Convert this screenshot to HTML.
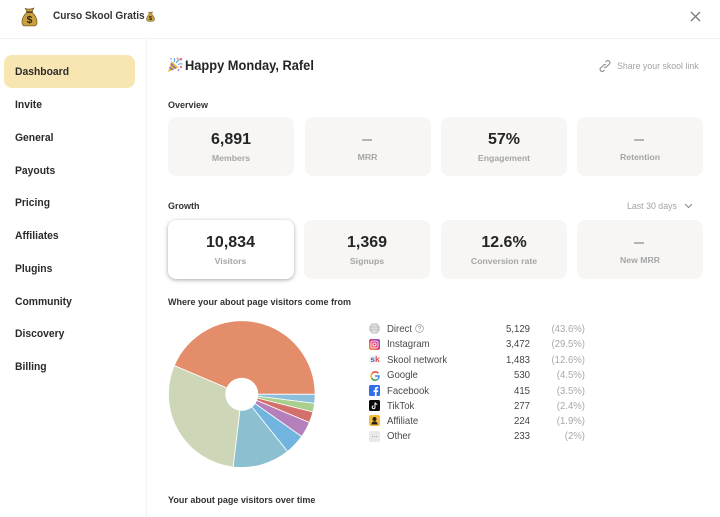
<!DOCTYPE html>
<html><head><meta charset="utf-8"><style>
html,body{margin:0;padding:0;background:#fff}
#p{position:relative;width:720px;height:517px;overflow:hidden;background:#fff;font-family:"Liberation Sans",Arial,sans-serif;color:#202124}
.t{position:absolute;white-space:nowrap;line-height:14px}
.n{position:absolute;left:15px;font-size:11px;font-weight:bold;line-height:14px;color:#2b2b2b;white-space:nowrap;transform:scaleX(.94);transform-origin:left center}
.h{font-size:9px;font-weight:bold;color:#333}
.c{position:absolute;width:126px;height:59px;background:#f7f6f4;border-radius:8px;text-align:center}
.v{position:absolute;left:0;right:0;top:14px;font-size:16px;font-weight:bold;line-height:18px;color:#252525}
.l{position:absolute;left:0;right:0;top:35px;font-size:8.7px;font-weight:bold;line-height:12px;color:#a5a5a5}
.d{position:absolute;left:57px;top:22px;width:10px;height:2px;background:#b4b4b4}
.l2{top:34px}
.lb{position:absolute;left:387px;font-size:10.2px;line-height:13px;color:#4a4a4a;white-space:nowrap;transform:scaleX(.94);transform-origin:left center}
.nm{position:absolute;left:470px;width:60px;text-align:right;font-size:10.2px;line-height:13px;color:#444;transform:scaleX(.94);transform-origin:right center}
.pc{position:absolute;left:530px;width:55px;text-align:right;font-size:10.2px;line-height:13px;color:#a8a8a8;transform:scaleX(.94);transform-origin:right center}
.i{position:absolute;left:369px}
</style></head><body><div id="p">
<div style="position:absolute;left:0;top:38px;width:720px;height:1px;background:#f3f3f3"></div>
<div style="position:absolute;left:146px;top:39px;width:1px;height:478px;background:#f3f3f3"></div>

<svg style="position:absolute;left:20.5px;top:6.5px" width="17" height="20" viewBox="0 0 18 21"><path d="M4.5 1.5 Q9 3 13.5 1 L11.5 5.5 Q17 10 17 16 Q17 20 13 20 L5 20 Q1 20 1 16 Q1 10 6.5 5.5Z" fill="#c9a040" stroke="#6b4d1c" stroke-width=".7"/><rect x="5.6" y="4.6" width="6.8" height="1.6" fill="#4a3413"/><text x="9" y="17" font-family="Liberation Sans" font-size="11" font-weight="bold" text-anchor="middle" fill="#2e2411">$</text></svg>
<div class="t" style="left:53px;top:9px;font-size:11px;font-weight:bold;color:#333;transform:scaleX(.92);transform-origin:left center">Curso Skool Gratis</div>
<svg style="position:absolute;left:146px;top:10.5px" width="9" height="11" viewBox="0 0 18 21"><path d="M5 1.5 Q9 3 13 1 L11.5 5.5 Q17 10 17 16 Q17 20 13 20 L5 20 Q1 20 1 16 Q1 10 6.5 5.5Z" fill="#c9a040" stroke="#6b4d1c"/><text x="9" y="17" font-family="Liberation Sans" font-size="11" font-weight="bold" text-anchor="middle" fill="#2e2411">$</text></svg>
<svg style="position:absolute;left:689px;top:10px" width="13" height="13" viewBox="0 0 13 13"><path d="M2 2 L11 11 M11 2 L2 11" stroke="#7b7b7b" stroke-width="1.3" fill="none"/></svg>

<div style="position:absolute;left:4px;top:55px;width:131px;height:33px;background:#f8e6b2;border-radius:8px"></div>
<div class="n" style="top:65px">Dashboard</div>
<div class="n" style="top:98px">Invite</div>
<div class="n" style="top:131px">General</div>
<div class="n" style="top:164px">Payouts</div>
<div class="n" style="top:196px">Pricing</div>
<div class="n" style="top:229px">Affiliates</div>
<div class="n" style="top:262px">Plugins</div>
<div class="n" style="top:295px">Community</div>
<div class="n" style="top:327px">Discovery</div>
<div class="n" style="top:360px">Billing</div>

<svg style="position:absolute;left:167px;top:57px" width="16" height="16" viewBox="0 0 16 16"><path d="M1 15 L4.5 4 L11.5 10.5Z" fill="#e8b93c"/><path d="M2.6 10.2 L6 13 M3.7 6.5 L8.8 11.6" stroke="#7a6bc4" stroke-width="1.3"/><path d="M7 5 Q8.4 3 7 1.2 M11 7.5 Q13 6.3 15.5 7 M9 6 L12.5 2" stroke="#5a9fe0" stroke-width="1.1" fill="none"/><circle cx="14" cy="2.2" r="1.2" fill="#e0608a"/><circle cx="10.5" cy="1.5" r="1" fill="#e8a03c"/><circle cx="14" cy="10" r="1.1" fill="#e0608a"/><circle cx="11.5" cy="13" r=".9" fill="#7a6bc4"/><circle cx="4" cy="1.8" r=".8" fill="#5a9fe0"/></svg>
<div class="t" style="left:185px;top:59px;font-size:14.2px;font-weight:bold;color:#252525;transform:scaleX(.905);transform-origin:left center">Happy Monday, Rafel</div>
<svg style="position:absolute;left:598px;top:59px" width="14" height="14" viewBox="0 0 14 14" fill="none" stroke="#909090" stroke-width="1.1"><path d="M6 8 Q7.2 9 8.5 7.8 L11.6 4.8 A2.1 2.1 0 0 0 8.7 1.9 L7.4 3.1"/><path d="M8 6 Q6.8 5 5.5 6.2 L2.4 9.2 A2.1 2.1 0 0 0 5.3 12.1 L6.6 10.9"/></svg>
<div class="t" style="left:617px;top:59px;font-size:8.8px;color:#a3a3a3">Share your skool link</div>

<div class="t h" style="left:168px;top:98px">Overview</div>
<div class="c" style="left:168px;top:117px"><div class="v">6,891</div><div class="l">Members</div></div>
<div class="c" style="left:304.5px;top:117px"><div class="d"></div><div class="l l2">MRR</div></div>
<div class="c" style="left:441px;top:117px"><div class="v">57%</div><div class="l">Engagement</div></div>
<div class="c" style="left:577px;top:117px"><div class="d"></div><div class="l l2">Retention</div></div>

<div class="t h" style="left:168px;top:199px">Growth</div>
<div class="t" style="left:627px;top:199px;font-size:8.8px;color:#a3a3a3">Last 30 days</div>
<svg style="position:absolute;left:684px;top:202px" width="9" height="8" viewBox="0 0 9 8"><path d="M1 2 L4.5 5.5 L8 2" fill="none" stroke="#8a8a8a" stroke-width="1.1"/></svg>
<div class="c" style="left:167.5px;top:219.5px;background:#fff;box-shadow:0 1px 4px rgba(0,0,0,.35)"><div class="v">10,834</div><div class="l">Visitors</div></div>
<div class="c" style="left:304px;top:220px"><div class="v">1,369</div><div class="l">Signups</div></div>
<div class="c" style="left:441px;top:220px"><div class="v">12.6%</div><div class="l">Conversion rate</div></div>
<div class="c" style="left:577px;top:220px"><div class="d"></div><div class="l l2">New MRR</div></div>

<div class="t h" style="left:168px;top:295px">Where your about page visitors come from</div>

<svg style="position:absolute;left:160px;top:310px" width="170" height="170" viewBox="160 310 170 170">
<g stroke="#fff" stroke-width=".8" stroke-linejoin="round">
<path d="M241.8 394.2 L315.1 394.2 A73.3 73.3 0 0 1 314.5 403.4Z" fill="#8bbfdb"/>
<path d="M241.8 394.2 L314.5 403.4 A73.3 73.3 0 0 1 312.9 412Z" fill="#a9cf8f"/>
<path d="M241.8 394.2 L312.9 412 A73.3 73.3 0 0 1 309.4 422.5Z" fill="#d4706b"/>
<path d="M241.8 394.2 L309.4 422.5 A73.3 73.3 0 0 1 301.6 436.5Z" fill="#b57fbb"/>
<path d="M241.8 394.2 L301.6 436.5 A73.3 73.3 0 0 1 287.5 451.5Z" fill="#72b4e0"/>
<path d="M241.8 394.2 L287.5 451.5 A73.3 73.3 0 0 1 233.1 467Z" fill="#8cc0d0"/>
<path d="M241.8 394.2 L233.1 467 A73.3 73.3 0 0 1 174.3 365.5Z" fill="#cdd7b8"/>
<path d="M241.8 394.2 L174.3 365.5 A73.3 73.3 0 0 1 315.1 394.2Z" fill="#e38d6a"/>
</g>
<circle cx="241.8" cy="394.2" r="16.5" fill="#fff"/>
</svg>

<svg class="i" style="top:323px" width="12" height="12" viewBox="0 0 12 12"><circle cx="5.5" cy="5.5" r="5.5" fill="#c9c9c9"/><path d="M0 5.5H11M5.5 0V11M1.5 2Q5.5 4 9.5 2M1.5 9Q5.5 7 9.5 9M5.5 0Q2 5.5 5.5 11Q9 5.5 5.5 0" stroke="#e4e4e4" stroke-width=".6" fill="none"/></svg>
<div class="lb" style="top:323px">Direct</div>
<svg style="position:absolute;left:415px;top:324px" width="9" height="9" viewBox="0 0 9 9"><circle cx="4.5" cy="4.5" r="3.9" fill="none" stroke="#999" stroke-width=".7"/><path d="M3.3 3.5Q3.5 2.4 4.6 2.4Q5.8 2.6 5.6 3.7Q5.3 4.3 4.6 4.7V5.3M4.6 6.1V6.8" fill="none" stroke="#999" stroke-width=".7"/></svg>
<div class="nm" style="top:323px">5,129</div><div class="pc" style="top:323px">(43.6%)</div>

<svg class="i" style="top:338.5px" width="12" height="12" viewBox="0 0 12 12"><defs><linearGradient id="g" x1="0" y1="1" x2="1" y2="0"><stop offset="0" stop-color="#f9a03c"/><stop offset=".5" stop-color="#e0407a"/><stop offset="1" stop-color="#7a50d0"/></linearGradient></defs><rect width="11" height="11" rx="2" fill="url(#g)"/><rect x="2" y="2" width="7" height="7" rx="2" fill="none" stroke="#fff" stroke-width=".8"/><circle cx="5.5" cy="5.5" r="1.6" fill="none" stroke="#fff" stroke-width=".8"/></svg>
<div class="lb" style="top:338px">Instagram</div>
<div class="nm" style="top:338px">3,472</div><div class="pc" style="top:338px">(29.5%)</div>

<div style="position:absolute;left:369px;top:353.5px;width:11px;height:11px;background:#f8f8fa;border-radius:2px"></div>
<div class="t" style="left:370.3px;top:352px;font-size:8.5px;font-weight:bold;color:#d94a4a"><span style="color:#3f5fb0">s</span>k</div>
<div class="lb" style="top:354px">Skool network</div>
<div class="nm" style="top:354px">1,483</div><div class="pc" style="top:354px">(12.6%)</div>

<svg class="i" style="top:369.5px" width="12" height="12" viewBox="0 0 12 12" fill="none" stroke-width="1.5"><path d="M9.3 3.2A4 4 0 0 0 3 3.6" stroke="#e8483a"/><path d="M3 3.6A4 4 0 0 0 2.6 8" stroke="#f4b400"/><path d="M2.6 8A4 4 0 0 0 9 9" stroke="#34a853"/><path d="M9 9Q10 8 10 6H6" stroke="#4285f4"/></svg>
<div class="lb" style="top:369px">Google</div>
<div class="nm" style="top:369px">530</div><div class="pc" style="top:369px">(4.5%)</div>

<svg class="i" style="top:384.5px" width="12" height="12" viewBox="0 0 12 12"><rect width="11" height="11" rx="1.5" fill="#2f6fe8"/><path d="M7.6 11V7H9L9.2 5.3H7.6V4.3Q7.6 3.4 8.5 3.4H9.3V2Q8.6 1.9 8 1.9Q5.9 1.9 5.9 4V5.3H4.5V7H5.9V11Z" fill="#fff"/></svg>
<div class="lb" style="top:385px">Facebook</div>
<div class="nm" style="top:385px">415</div><div class="pc" style="top:385px">(3.5%)</div>

<svg class="i" style="top:399.5px" width="12" height="12" viewBox="0 0 12 12"><rect width="11" height="11" rx="1.5" fill="#0a0a0a"/><path d="M6 2.5V7.3A1.4 1.4 0 1 1 4.6 5.9M6 2.5Q6.4 4.2 8.3 4.4" fill="none" stroke="#fff" stroke-width="1"/></svg>
<div class="lb" style="top:400px">TikTok</div>
<div class="nm" style="top:400px">277</div><div class="pc" style="top:400px">(2.4%)</div>

<svg class="i" style="top:414.5px" width="12" height="12" viewBox="0 0 12 12"><rect width="11" height="11" rx="2" fill="#f4bd3c"/><circle cx="5.5" cy="4" r="2" fill="#222"/><path d="M2.2 9.5Q3 6.3 5.5 6.3Q8 6.3 8.8 9.5Z" fill="#222"/></svg>
<div class="lb" style="top:415px">Affiliate</div>
<div class="nm" style="top:415px">224</div><div class="pc" style="top:415px">(1.9%)</div>

<svg class="i" style="top:430.5px" width="12" height="12" viewBox="0 0 12 12"><rect width="11" height="11" rx="2" fill="#e9e9e9"/><path d="M3 5.5H8" stroke="#a5a5a5" stroke-width="1" stroke-dasharray="1 1"/></svg>
<div class="lb" style="top:430px">Other</div>
<div class="nm" style="top:430px">233</div><div class="pc" style="top:430px">(2%)</div>

<div class="t h" style="left:168px;top:493px">Your about page visitors over time</div>
</div></body></html>
